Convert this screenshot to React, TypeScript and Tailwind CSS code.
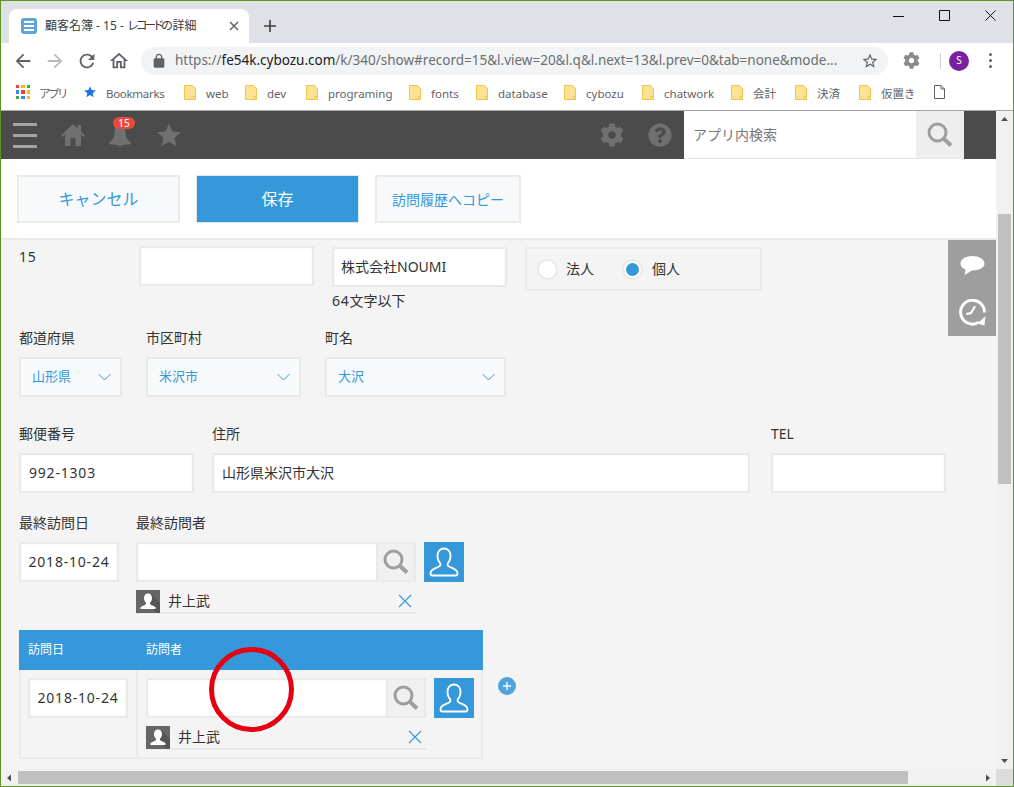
import { FaCog, FaQuestionCircle } from 'react-icons/fa'

const bookmarks = [
  { name: 'web', width: 'w-[61px]' },
  { name: 'dev', width: 'w-[61px]' },
  { name: 'programing', width: 'w-[103px]' },
  { name: 'fonts', width: 'w-[67px]' },
  { name: 'database', width: 'w-[88px]' },
  { name: 'cybozu', width: 'w-[78px]' },
  { name: 'chatwork', width: 'w-[89px]' },
  { name: '会計', width: 'w-[64px]' },
  { name: '決済', width: 'w-[64px]' },
  { name: '仮置き', width: 'w-[75px]' },
]

function Folder() {
  return (
    <svg width="12" height="15" viewBox="0 0 12 15" className="shrink-0">
      <path d="M.5.5h8l3 3v11H.5z" fill="#fde293" stroke="#f0c64a" />
      <path d="M9 11.500h2.500v3H9z" fill="#fde293" stroke="#f0c64a" />
    </svg>
  )
}

function SearchIcon() {
  return (
    <svg width="26" height="26" viewBox="0 0 26 26" fill="none" stroke="#9e9e9e">
      <circle cx="10.500" cy="10.500" r="8.500" strokeWidth="3" />
      <path d="M16.500 16.500l7.500 7" strokeWidth="4" />
    </svg>
  )
}

function UserOutline() {
  return (
    <svg width="30" height="30" viewBox="0 0 30 30" fill="none" stroke="#fff" strokeWidth="1.800">
      <path d="M15 1.500c-4 0-6.500 3-6.500 7.500 0 3 1 5.500 2.500 7 .8 1 .6 2.500-.5 3.200-2 1.100-5 2.100-7.300 3.800-1.200.9-1.700 2-1.700 3.500 0 1.200.7 2 2 2h23c1.300 0 2-.8 2-2 0-1.500-.5-2.600-1.700-3.500-2.300-1.700-5.300-2.700-7.300-3.800-1.100-.7-1.300-2.200-.5-3.200 1.500-1.500 2.500-4 2.500-7 0-4.500-2.500-7.500-6.500-7.500z" />
    </svg>
  )
}

function TextBox({ className, children }: { className: string; children?: React.ReactNode }) {
  return (
    <div className={`flex h-10 items-center border-2 border-[#e9ebeb] bg-white text-sm text-[#333] shadow-[inset_0_0_3px_rgba(0,0,0,0.05)] ${className}`}>
      {children}
    </div>
  )
}

function Select({ className, value }: { className: string; value: string }) {
  return (
    <div className={`flex h-10 items-center justify-between border-2 border-[#e8ebec] bg-[#f7f9fa] pl-[11px] pr-[9px] text-[13px] text-[#3498db] ${className}`}>
      <span>{value}</span>
      <svg width="13" height="8" viewBox="0 0 13 8" fill="none" stroke="#3498db" strokeWidth="1">
        <path d="M.5 1l6 6 6-6" />
      </svg>
    </div>
  )
}

function Field({ label, children }: { label: string; children: React.ReactNode }) {
  return (
    <div>
      <div className="mb-[9px] h-5 text-[14px] leading-5 text-[#333]">{label}</div>
      {children}
    </div>
  )
}

function UserPicker() {
  return (
    <div className="w-[328px]">
      <div className="flex items-start">
        <div className="flex h-10 w-[280px] border-2 border-[#e9ebeb] bg-white shadow-[inset_0_0_3px_rgba(0,0,0,0.05)]">
          <div className="flex-1" />
          <div className="flex w-[38px] items-center justify-center border-l-2 border-[#e9ebeb] bg-[#f0f0f0]">
            <SearchIcon />
          </div>
        </div>
        <div className="ml-[8px] flex h-10 w-10 items-center justify-center bg-[#3498db]">
          <UserOutline />
        </div>
      </div>
      <div className="mt-2 flex h-6 w-[280px] items-start border-b-2 border-[#e6e9ea]">
        <div className="h-[23px] w-6 shrink-0 overflow-hidden bg-[#666]">
          <svg width="24" height="23" viewBox="0 0 24 23">
            <path d="M9 12l12 11h3V13L15 4z" fill="#555" />
            <path d="M12 3.500c-2.500 0-4 2-4 4.500 0 2 .8 3.500 1.800 4.500.5.800.2 1.700-.6 2.200L4.500 17v2h15v-2l-4.700-2.300c-.8-.5-1.100-1.400-.6-2.200 1-1 1.800-2.500 1.800-4.500 0-2.500-1.500-4.500-4-4.500z" fill="#fff" />
          </svg>
        </div>
        <span className="ml-2 flex-1 text-[14px] leading-[22px] text-[#333]">井上武</span>
        <svg width="14" height="14" viewBox="0 0 14 14" className="mr-[4px] mt-[4px]" stroke="#3498db" strokeWidth="1.100">
          <path d="M1 1l12 12M13 1L1 13" />
        </svg>
      </div>
    </div>
  )
}

export default function App() {
  return (
    <div className="relative flex h-[787px] w-[1014px] flex-col overflow-hidden border border-[#5c961f] bg-white font-['Noto_Sans','Noto_Sans_CJK_JP',sans-serif]">
      {/* Tab strip */}
      <div className="flex h-[42px] shrink-0 items-start bg-[#dee1e6]">
        <div className="ml-2 mt-2 flex h-[34px] w-[240px] items-center rounded-t-lg bg-white pl-3 pr-[10px]">
          <div className="flex h-4 w-4 flex-col items-center justify-center gap-[2px] rounded-[3px] bg-[#5fa5d8]">
            <div className="h-[2px] w-[10px] bg-white" />
            <div className="h-[2px] w-[10px] bg-white" />
            <div className="h-[2px] w-[10px] bg-white" />
          </div>
          <span className="ml-2 flex-1 whitespace-nowrap text-[12px] text-[#3c4043]">
            顧客名簿 - 15 - <span className="tracking-[-3.500px]">レコードの</span><span className="ml-[3px]">詳細</span>
          </span>
          <svg width="10" height="10" viewBox="0 0 10 10" stroke="#5f6368" strokeWidth="1.500">
            <path d="M1 1l8 8M9 1L1 9" />
          </svg>
        </div>
        <svg width="14" height="14" viewBox="0 0 14 14" className="ml-[14px] mt-[18px]" stroke="#3c4043" strokeWidth="1.600">
          <path d="M7 1v12M1 7h12" />
        </svg>
        <div className="ml-auto mr-[17px] mt-[9px] flex items-center gap-[35px]">
          <svg width="11" height="11" viewBox="0 0 11 11" stroke="#111" strokeWidth="1"><path d="M0 6.500h11" /></svg>
          <svg width="11" height="11" viewBox="0 0 11 11" fill="none" stroke="#111" strokeWidth="1"><path d="M.5.500h10v10H.5z" /></svg>
          <svg width="11" height="11" viewBox="0 0 11 11" stroke="#111" strokeWidth="1"><path d="M.5.500l10 10M10.500.500l-10 10" /></svg>
        </div>
      </div>

      {/* Toolbar */}
      <div className="flex h-[35px] shrink-0 items-center pl-[6px]">
        <div className="flex w-8 justify-center">
          <svg width="22" height="22" viewBox="0 0 24 24" fill="#5f6368"><path d="M20 11H7.830l5.590-5.590L12 4l-8 8 8 8 1.410-1.410L7.830 13H20v-2z" /></svg>
        </div>
        <div className="flex w-8 justify-center">
          <svg width="22" height="22" viewBox="0 0 24 24" fill="#b8babc"><path d="M12 4l-1.410 1.410L16.170 11H4v2h12.170l-5.580 5.590L12 20l8-8z" /></svg>
        </div>
        <div className="flex w-8 justify-center">
          <svg width="22" height="22" viewBox="0 0 24 24" fill="#5f6368"><path d="M17.650 6.350C16.200 4.900 14.210 4 12 4c-4.420 0-7.990 3.580-7.990 8s3.570 8 7.990 8c3.730 0 6.840-2.550 7.730-6h-2.080c-.82 2.330-3.040 4-5.650 4-3.310 0-6-2.690-6-6s2.690-6 6-6c1.660 0 3.140.69 4.220 1.780L13 11h7V4l-2.350 2.350z" /></svg>
        </div>
        <div className="flex w-8 justify-center">
          <svg width="22" height="22" viewBox="0 0 24 24" fill="#5f6368"><path d="M12 5.690l5 4.500V18h-2v-6H9v6H7v-7.810l5-4.500M12 3L2 12h3v8h6v-6h2v6h6v-8h3L12 3z" /></svg>
        </div>
        <div className="ml-[6px] flex h-7 w-[747px] items-center rounded-full bg-[#f1f3f4] pl-[10px] pr-[9px]">
          <svg width="16" height="16" viewBox="0 0 24 24" fill="#5f6368"><path d="M18 8h-1V6c0-2.760-2.240-5-5-5S7 3.240 7 6v2H6c-1.100 0-2 .9-2 2v10c0 1.100.9 2 2 2h12c1.100 0 2-.9 2-2V10c0-1.100-.9-2-2-2zM9 6c0-1.660 1.340-3 3-3s3 1.340 3 3v2H9V6z" /></svg>
          <span className="ml-[8px] flex-1 whitespace-nowrap text-[13.500px] text-[#6b6f73]">
            https://<span className="text-[#202124]">fe54k.cybozu.com</span>/k/340/show#record=15&amp;l.view=20&amp;l.q&amp;l.next=13&amp;l.prev=0&amp;tab=none&amp;mode...
          </span>
          <svg width="18" height="18" viewBox="0 0 24 24" fill="#5f6368"><path d="M22 9.240l-7.190-.62L12 2 9.190 8.630 2 9.240l5.460 4.730L5.820 21 12 17.270 18.180 21l-1.630-7.030L22 9.240zM12 15.400l-3.760 2.270 1-4.280-3.320-2.880 4.380-.38L12 6.100l1.710 4.040 4.380.38-3.320 2.880 1 4.280L12 15.400z" /></svg>
        </div>
        <FaCog className="ml-[15px] text-[17px] text-[#8a8a8a]" />
        <div className="ml-[20px] h-[16px] w-px bg-[#d0d2d4]" />
        <div className="ml-2 flex h-5 w-5 items-center justify-center rounded-full bg-[#7b1fa2] text-[10px] text-white">S</div>
        <div className="ml-[20px] flex flex-col gap-[3px]">
          <div className="h-[3px] w-[3px] rounded-full bg-[#5f6368]" />
          <div className="h-[3px] w-[3px] rounded-full bg-[#5f6368]" />
          <div className="h-[3px] w-[3px] rounded-full bg-[#5f6368]" />
        </div>
      </div>

      {/* Bookmarks bar */}
      <div className="flex h-[33px] shrink-0 items-start border-b border-[#a5a5a5] pl-[15px] pt-[7px] text-[11.500px] leading-[17px] text-[#5f6368]">
        <div className="grid h-[14px] w-[14px] grid-cols-3 gap-[2px]">
          <div className="bg-[#ea4335]" /><div className="bg-[#fbbc05]" /><div className="bg-[#34a853]" />
          <div className="bg-[#4285f4]" /><div className="bg-[#ea4335]" /><div className="bg-[#fbbc05]" />
          <div className="bg-[#34a853]" /><div className="bg-[#4285f4]" /><div className="bg-[#fbbc05]" />
        </div>
        <span className="ml-[9px] w-[44px] tracking-[-2.500px]">アプリ</span>
        <svg width="14" height="14" viewBox="0 0 24 24" fill="#1a73e8"><path d="M12 17.270L18.180 21l-1.640-7.030L22 9.240l-7.190-.61L12 2 9.190 8.630 2 9.240l5.460 4.730L5.820 21z" /></svg>
        <span className="ml-[9px] w-[78px] tracking-[-0.300px]">Bookmarks</span>
        {bookmarks.map((b) => (
          <div key={b.name} className={`flex items-start gap-[10px] ${b.width}`}>
            <Folder />
            <span>{b.name}</span>
          </div>
        ))}
        <svg width="11" height="14" viewBox="0 0 11 14" fill="none" stroke="#5f6368">
          <path d="M.5.500h6.500l3.500 3.500v9.500H.5zM7 .5V4h3.500" />
        </svg>
      </div>

      <div className="flex min-h-0 flex-1">
        <div className="flex w-[995px] flex-col">
          {/* App header */}
          <div className="flex h-12 shrink-0 items-center bg-[#4b4b4b]">
            <div className="ml-3 flex w-6 flex-col gap-[8px]">
              <div className="h-[3px] bg-[#a3a3a3]" />
              <div className="h-[3px] bg-[#a3a3a3]" />
              <div className="h-[3px] bg-[#a3a3a3]" />
            </div>
            <svg width="24" height="24" viewBox="0 0 24 24" fill="#707070" className="ml-[24px]">
              <path d="M12 1L0 12.500 1 14l3-2.200V23h5.500v-8h5v8H20V11.800l3 2.200 1-1.500-4-3.800V2h-3.200v3.500z" />
            </svg>
            <div className="relative ml-[23px] h-[24px] w-[24px]">
              <svg width="24" height="24" viewBox="0 0 24 24" fill="#707070">
                <path d="M12 2C8 2 6.500 5 6.500 9c0 4.500-1.500 8-5.500 10.500V21c3 .7 7 1 11 1s8-.3 11-1v-1.500C19 17 17.500 13.500 17.500 9c0-4-1.500-7-5.500-7zM9.500 22.500h5L12 24z" />
              </svg>
              <div className="absolute left-[5px] top-[-6px] flex h-3 w-[22px] items-center justify-center rounded-full bg-[#e74c3c] text-[10px] leading-none text-white">15</div>
            </div>
            <svg width="24" height="24" viewBox="0 0 24 24" fill="#707070" className="ml-[25px]">
              <path d="M12 .5l3.400 8 8.600.7-6.500 5.600 2 8.400L12 18.700l-7.500 4.500 2-8.400L0 9.200l8.600-.7z" />
            </svg>
            <FaCog className="ml-auto text-[24px] text-[#707070]" />
            <FaQuestionCircle className="ml-[24px] text-[24px] text-[#707070]" />
            <div className="ml-3 flex h-full w-[232px] items-center border-b border-[#e3e7e8] bg-white pl-[9px] text-[14px] text-[#777]">アプリ内検索</div>
            <div className="flex h-full w-12 items-center justify-center border-b border-[#e3e7e8] bg-[#eeeeee]">
              <SearchIcon />
            </div>
            <div className="w-[32px]" />
          </div>

          {/* Action bar */}
          <div className="flex h-[81px] shrink-0 items-start gap-4 border-b-2 border-[#e8e9ea] pl-4 pt-4">
            <div className="flex h-12 w-[163px] items-center justify-center border-2 border-[#e8ebec] bg-[#f7f9fa] text-[16px] text-[#3498db]">キャンセル</div>
            <div className="flex h-12 w-[163px] items-center justify-center border border-[#e3e7e8] bg-[#3498db] text-[16px] text-white">保存</div>
            <div className="flex h-12 w-[146px] items-center justify-center border-2 border-[#e8ebec] bg-[#f7f9fa] text-[14px] text-[#3498db]">訪問履歴へコピー</div>
          </div>

          {/* Record form */}
          <div className="relative min-h-0 flex-1 bg-[#f4f4f4] pl-[18px]">
            <div className="flex h-[88px] items-start text-sm text-[#333]">
              <div className="mt-[7px] w-[120px] tracking-[0.700px]">15</div>
              <TextBox className="mt-[6px] w-[175px]" />
              <div className="ml-[18px] mt-[7px] w-[175px]">
                <TextBox className="pl-[7px]">株式会社NOUMI</TextBox>
                <div className="mt-1 text-[14px] leading-5"><span className="tracking-[0.700px]">64</span>文字以下</div>
              </div>
              <div className="ml-[18px] mt-[7px] flex h-[44px] w-[237px] items-center border-2 border-[#e9ebeb] pl-[10px]">
                <div className="h-[21px] w-[21px] rounded-full border-2 border-[#e9ebeb] bg-white" />
                <span className="ml-[8px] text-[14px]">法人</span>
                <div className="ml-[28px] flex h-[21px] w-[21px] items-center justify-center rounded-full border-2 border-[#e9ebeb] bg-white">
                  <div className="h-[13px] w-[13px] rounded-full bg-[#3498db]" />
                </div>
                <span className="ml-[9px] text-[14px]">個人</span>
              </div>
            </div>

            <div className="flex gap-6">
              <Field label="都道府県"><Select className="w-[103px]" value="山形県" /></Field>
              <Field label="市区町村"><Select className="w-[155px]" value="米沢市" /></Field>
              <Field label="町名"><Select className="w-[181px]" value="大沢" /></Field>
            </div>

            <div className="mt-[27px] flex gap-[18px]">
              <Field label="郵便番号"><TextBox className="w-[175px] pl-2 tracking-[0.800px]">992-1303</TextBox></Field>
              <Field label="住所"><TextBox className="w-[538px] pl-2">山形県米沢市大沢</TextBox></Field>
              <div className="ml-[3px]">
                <Field label="TEL"><TextBox className="w-[175px]" /></Field>
              </div>
            </div>

            <div className="mt-5 flex gap-[17px]">
              <Field label="最終訪問日"><TextBox className="w-[100px] justify-center tracking-[0.800px]">2018-10-24</TextBox></Field>
              <Field label="最終訪問者"><UserPicker /></Field>
            </div>

            {/* Visit history table */}
            <div className="mt-4 flex items-start">
              <div className="w-[464px]">
                <div className="flex h-10 items-center bg-[#3498db] text-[12px] text-white">
                  <div className="w-[127px] pl-[9px]">訪問日</div>
                  <div>訪問者</div>
                </div>
                <div className="flex h-[89px] border-2 border-t-0 border-[#e9ebeb]">
                  <div className="w-[117px] border-r-2 border-[#e9ebeb] pl-[7px] pt-2">
                    <TextBox className="w-[100px] justify-center tracking-[0.800px]">2018-10-24</TextBox>
                  </div>
                  <div className="pl-2 pt-2">
                    <UserPicker />
                  </div>
                </div>
              </div>
              <div className="ml-[15px] mt-[47px] flex h-[18px] w-[18px] items-center justify-center rounded-full bg-[#4fa3de]">
                <svg width="8" height="8" viewBox="0 0 8 8" stroke="#fff" strokeWidth="1.300"><path d="M4 0v8M0 4h8" /></svg>
              </div>
            </div>

            {/* Floating side panel */}
            <div className="absolute right-0 top-0 flex h-24 w-12 flex-col items-center bg-[#9e9e9e]">
              <svg width="25" height="20" viewBox="0 0 24 20" fill="#fff" className="mt-[16px]">
                <path d="M12 0C5.400 0 0 3 0 7.500c0 2.800 2 5 5 6.200-.2 2-.6 3.800-1 5.300 2.500-1 5-2.800 7-4.500h1c6.600 0 12-3 12-7S18.600 0 12 0z" />
              </svg>
              <svg width="27" height="27" viewBox="0 0 26 26" fill="none" stroke="#fff" className="mt-[23px]">
                <path d="M19 22.500A11.500 11.500 0 1 1 24.500 13" strokeWidth="2.800" />
                <path d="M7 14.500l4.500-1L15.500 7" strokeWidth="2" />
                <path d="M25.500 16.500l-1 9-7-2z" fill="#fff" stroke="none" />
              </svg>
            </div>
          </div>
        </div>

        {/* Vertical scrollbar */}
        <div className="flex w-[17px] flex-col items-center bg-[#f1f1f1]">
          <svg width="9" height="17" viewBox="0 0 9 17" fill="#505050"><path d="M4.500 6L8 10H1z" /></svg>
          <div className="mt-[86px] h-[270px] w-[13px] bg-[#c0c0c0]" />
          <svg width="9" height="17" viewBox="0 0 9 17" fill="#505050" className="mt-auto"><path d="M1 7h7l-3.500 4z" /></svg>
        </div>
      </div>

      {/* Horizontal scrollbar */}
      <div className="flex h-[17px] shrink-0 items-center bg-[#f1f1f1]">
        <svg width="17" height="16" viewBox="0 0 17 16" fill="#505050"><path d="M6 8l4-3.500v7z" /></svg>
        <div className="h-[13px] w-[890px] bg-[#c0c0c0]" />
        <svg width="17" height="16" viewBox="0 0 17 16" fill="#505050" className="ml-[71px]"><path d="M7 4.500L11 8l-4 3.500z" /></svg>
        <div className="ml-auto h-full w-[17px] bg-[#dcdcdc]" />
      </div>

      {/* Hand-drawn annotation over the page */}
      <div className="absolute left-[208px] top-[646px] h-[85px] w-[85px] rounded-full border-[5px] border-[#e60012]" />
    </div>
  )
}
